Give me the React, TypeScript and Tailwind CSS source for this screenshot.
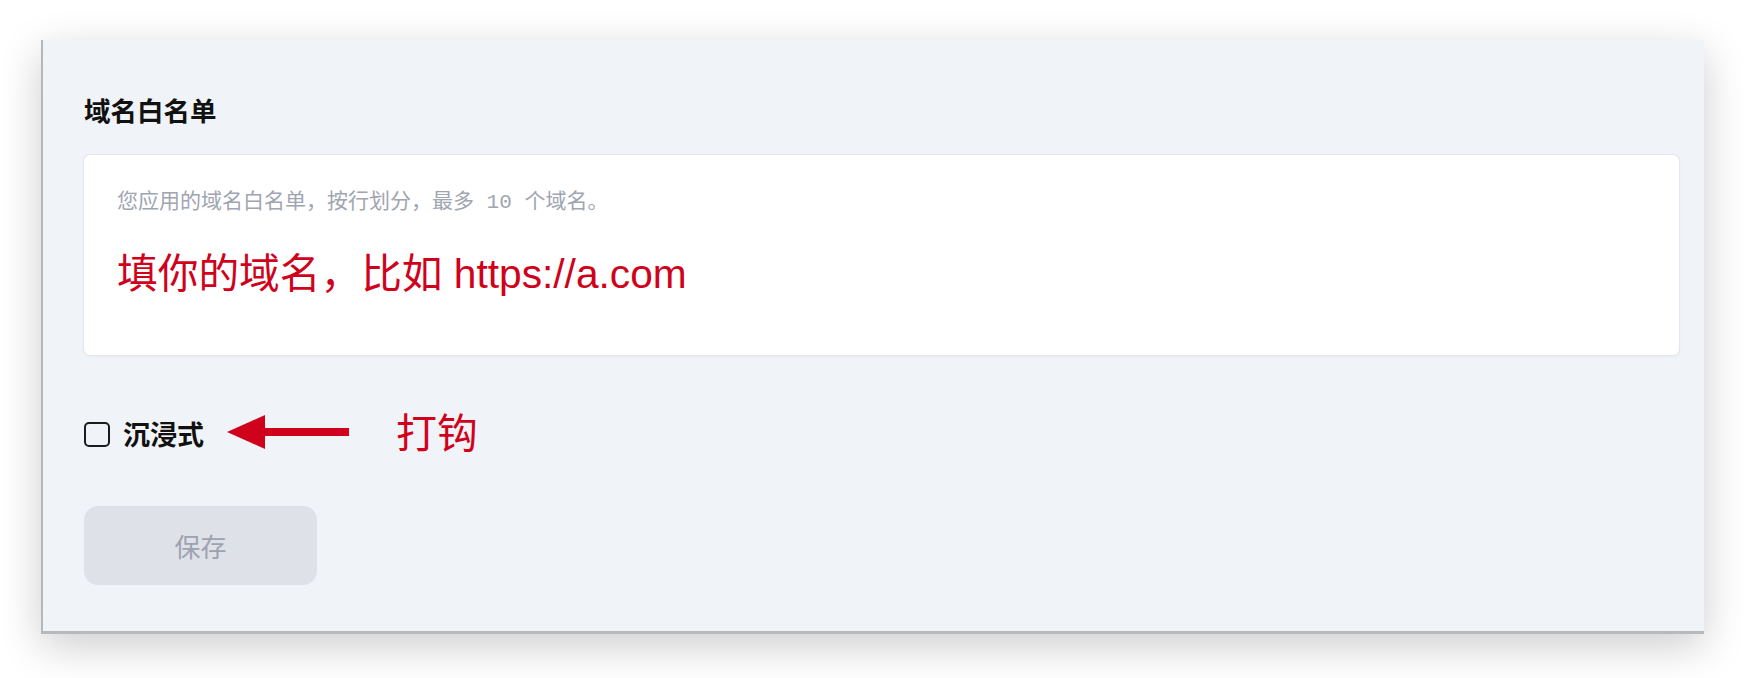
import { useState } from "react";

const cjk = "font-['Noto_Sans_CJK_SC',sans-serif]";

function Arrow() {
  return (
    <svg width="122" height="34" viewBox="0 0 122 34" className="shrink-0">
      <polygon points="0,17 38,0 38,34" fill="#d0021b" />
      <rect x="36" y="13" width="86" height="8" fill="#d0021b" />
    </svg>
  );
}

export default function App() {
  const [immersive, setImmersive] = useState(false);
  const [domains, setDomains] = useState("");

  return (
    <div className="w-full h-[678px] bg-white pt-[40px] pl-[41px] overflow-hidden">
      <div className="w-[1663px] bg-[#f0f3f7] border-l-2 border-b-[3px] border-l-[#b4b8bc] border-b-[#b6babd] shadow-[0_12px_40px_rgba(0,0,0,0.2)] pl-[41px] pr-[25px] pt-[52px] pb-[46px]">
        <h2 className={`${cjk} text-[26.5px] leading-[36px] font-bold text-[#111]`}>域名白名单</h2>

        <div className="mt-[27px] h-[200px] bg-white rounded-md shadow-[0_0_0_1px_rgba(225,228,240,0.9),0_1px_4px_rgba(0,0,0,0.05)] pl-[33px] pt-[33px]">
          <textarea
            value={domains}
            onChange={(e) => setDomains(e.target.value)}
            placeholder="您应用的域名白名单，按行划分，最多 10 个域名。"
            rows={1}
            className="block w-full resize-none bg-transparent outline-none font-['Liberation_Mono','Noto_Sans_CJK_SC',monospace] text-[21px] leading-[30px] text-[#333] placeholder:text-[#a0a5b1]"
          />
          <p className="mt-[32px] font-['Liberation_Sans','Noto_Sans_CJK_SC',sans-serif] text-[40.7px] leading-[48px] text-[#d0021b]">
            填你的域名，比如 https://a.com
          </p>
        </div>

        <div className="mt-[61px] h-[36px] flex items-center">
          <button
            type="button"
            onClick={() => setImmersive(!immersive)}
            className="w-[26px] h-[25px] rounded-[5px] border-2 border-[#1c1c1c] flex items-center justify-center shrink-0"
          >
            {immersive && <span className="text-[16px] leading-none">✓</span>}
          </button>
          <span className={`${cjk} ml-[13px] text-[27px] font-bold text-[#111]`}>沉浸式</span>
          <div className="ml-[23px] -mt-[4px]">
            <Arrow />
          </div>
          <span className={`${cjk} ml-[47px] -mt-[6px] text-[41px] text-[#d0021b]`}>打钩</span>
        </div>

        <button
          type="button"
          disabled
          className={`${cjk} mt-[54px] w-[233px] h-[79px] rounded-[14px] bg-[#dfe1e8] text-[26px] text-[#9ea2b0]`}
        >
          保存
        </button>
      </div>
    </div>
  );
}
